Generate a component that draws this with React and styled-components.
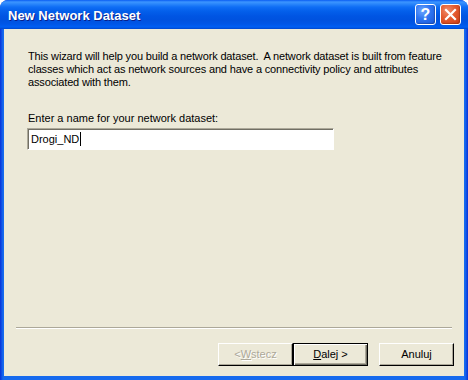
import styled, { createGlobalStyle } from "styled-components";

const GlobalStyle = createGlobalStyle`
  html, body {
    margin: 0;
    padding: 0;
    background: #ffffff;
  }
  body {
    font-family: "Liberation Sans", Arial, sans-serif;
  }
`;

const Window = styled.div`
  width: 468px;
  height: 380px;
  display: flex;
  flex-direction: column;
  background: #0842d8;
  border-radius: 8px 8px 0 0;
  overflow: hidden;
  box-sizing: border-box;
`;

const TitleBar = styled.div`
  height: 29px;
  flex: none;
  display: flex;
  align-items: center;
  padding: 0 7px 0 8px;
  gap: 4px;
  background: linear-gradient(
    to bottom,
    #0a5df2 0px,
    #3c95ff 2px,
    #2a86fb 4px,
    #0f6ef5 7px,
    #0460eb 11px,
    #0055e3 16px,
    #0052df 20px,
    #0056e7 24px,
    #005ff4 27px,
    #0046cc 29px
  );
`;

const Title = styled.div`
  flex: 1;
  color: #ffffff;
  font-weight: bold;
  font-size: 13px;
  text-shadow: 1px 1px 0 #0a1f8a;
  padding-top: 1px;
`;

const CaptionButton = styled.div`
  width: 21px;
  height: 21px;
  box-sizing: border-box;
  border: 1px solid #ffffff;
  border-radius: 3px;
  display: flex;
  align-items: center;
  justify-content: center;
  color: #ffffff;
  font-weight: bold;
  font-size: 16px;
  background: ${({ $variant }) =>
    $variant === "close"
      ? "radial-gradient(circle at 35% 30%, #f08c6c 0%, #e35a2f 45%, #cc3a12 100%)"
      : "radial-gradient(circle at 35% 30%, #6ea6ff 0%, #2e74f0 45%, #1a56d8 100%)"};
  box-shadow: inset -1px -1px 1px rgba(0, 0, 0, 0.2);
`;

const Frame = styled.div`
  flex: 1;
  display: flex;
  padding: 0 4px 4px 4px;
  background: linear-gradient(to right, #0831d9 0px, #166aee 3px, #166aee calc(100% - 3px), #0831d9 100%);
`;

const Client = styled.div`
  flex: 1;
  display: flex;
  flex-direction: column;
  background: #ece9d8;
  font-size: 11px;
  line-height: 13px;
  color: #000000;
`;

const Content = styled.div`
  flex: 1;
  padding: 21px 10px 0 24px;
  display: flex;
  flex-direction: column;
`;

const Intro = styled.p`
  margin: 0 0 23px 0;
  white-space: nowrap;
  letter-spacing: -0.15px;
`;

const Label = styled.div`
  margin-bottom: 3px;
`;

const TextBox = styled.div`
  width: 307px;
  height: 22px;
  box-sizing: border-box;
  margin-left: -1px;
  background: #ffffff;
  border: 1px solid;
  border-color: #aca899 #ffffff #ffffff #aca899;
  box-shadow: inset 1px 1px 0 #716f64;
  display: flex;
  align-items: center;
  padding-left: 3px;
  font-size: 11px;
`;

const Caret = styled.span`
  display: inline-block;
  width: 1px;
  height: 14px;
  background: #000000;
  margin-left: 1px;
`;

const Separator = styled.div`
  margin: 0 12px;
  height: 0;
  border-top: 1px solid #aca899;
  border-bottom: 1px solid #ffffff;
`;

const ButtonRow = styled.div`
  display: flex;
  justify-content: flex-end;
  padding: 14px 10px 10px 0;
`;

const ButtonGroup = styled.div`
  display: flex;
  margin-right: 11px;
`;

const Button = styled.div`
  width: 75px;
  height: 23px;
  box-sizing: border-box;
  display: flex;
  align-items: center;
  justify-content: center;
  background: #ece9d8;
  font-size: 11px;
  color: ${({ $disabled }) => ($disabled ? "#aca899" : "#000000")};
  text-shadow: ${({ $disabled }) => ($disabled ? "1px 1px 0 #ffffff" : "none")};
  border: 1px solid;
  border-color: ${({ $default }) => ($default ? "#000000" : "#ffffff #000000 #000000 #ffffff")};
  box-shadow: ${({ $default }) =>
    $default
      ? "inset 1px 1px 0 #ffffff, inset -1px -1px 0 #716f64, inset -2px -2px 0 #aca899"
      : "inset -1px -1px 0 #aca899"};
`;

const Key = styled.span`
  text-decoration: underline;
`;

export default function App() {
  return (
    <>
      <GlobalStyle />
      <Window>
        <TitleBar>
          <Title>New Network Dataset</Title>
          <CaptionButton $variant="help">?</CaptionButton>
          <CaptionButton $variant="close">
            <svg width="13" height="13" viewBox="0 0 13 13">
              <path d="M2 2 L11 11 M11 2 L2 11" stroke="#ffffff" strokeWidth="2.2" strokeLinecap="square" />
            </svg>
          </CaptionButton>
        </TitleBar>
        <Frame>
          <Client>
            <Content>
              <Intro>
                This wizard will help you build a network dataset.&nbsp; A network dataset is built from feature
                <br />
                classes which act as network sources and have a connectivity policy and attributes
                <br />
                associated with them.
              </Intro>
              <Label>Enter a name for your network dataset:</Label>
              <TextBox>
                Drogi_ND<Caret />
              </TextBox>
            </Content>
            <Separator />
            <ButtonRow>
              <ButtonGroup>
                <Button $disabled>
                  &lt; <Key>W</Key>stecz
                </Button>
                <Button $default>
                  <Key>D</Key>alej &gt;
                </Button>
              </ButtonGroup>
              <Button>Anuluj</Button>
            </ButtonRow>
          </Client>
        </Frame>
      </Window>
    </>
  );
}
